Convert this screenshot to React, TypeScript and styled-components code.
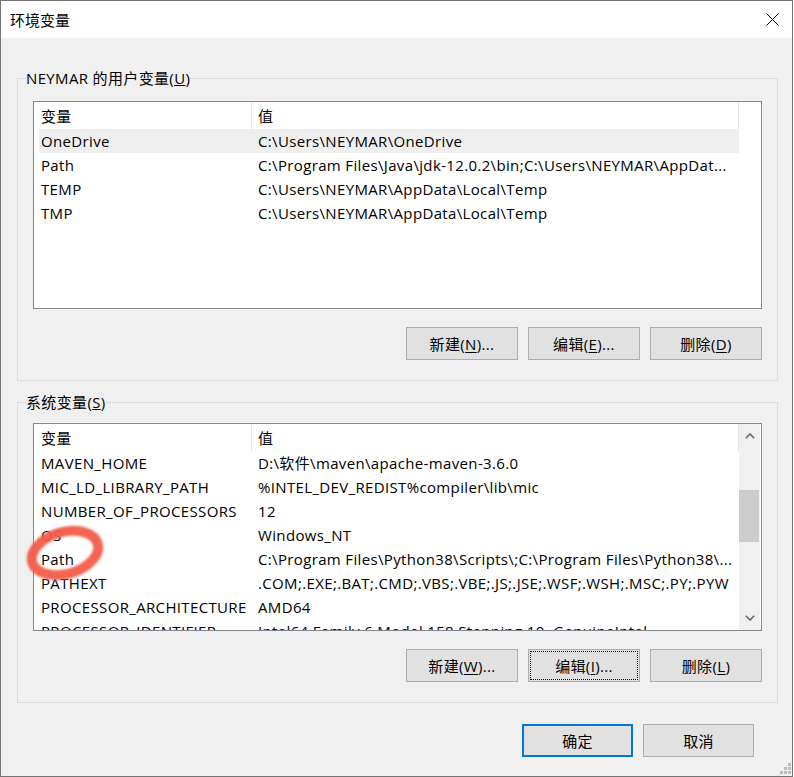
import React from "react";
import styled, { createGlobalStyle } from "styled-components";

const GlobalStyle = createGlobalStyle`
  html, body {
    margin: 0;
    padding: 0;
    background: #ffffff;
  }
  body {
    font-family: "Open Sans", "Noto Sans CJK SC", sans-serif;
    font-size: 15px;
    letter-spacing: 0.35px;
    color: #000000;
  }
`;

const Window = styled.div`
  position: relative;
  width: 793px;
  height: 777px;
  box-sizing: border-box;
  border: 1px solid #747474;
  background: #f0f0f0;
  display: flex;
  flex-direction: column;
`;

const TitleBar = styled.div`
  height: 37px;
  flex-shrink: 0;
  background: #ffffff;
  display: flex;
  align-items: center;
  justify-content: space-between;
  padding: 0 13px 0 9px;
`;

const TitleText = styled.span`
  font-size: 15px;
  line-height: 20px;
  letter-spacing: 0;
`;

const Content = styled.div`
  padding: 30px 14px 0 16px;
  display: flex;
  flex-direction: column;
`;

const GroupBox = styled.fieldset<{ $gap: number }>`
  margin: ${(p) => p.$gap}px 0 0 0;
  padding: 0;
  min-width: 0;
  border: 1px solid #dcdcdc;
`;

const GroupLegend = styled.legend`
  margin-left: 8px;
  padding: 0;
  font-size: 15px;
  line-height: 20px;
`;

const GroupInner = styled.div<{ $top: number }>`
  padding: ${(p) => p.$top}px 15px 20px 15px;
  display: flex;
  flex-direction: column;
`;

const ListBox = styled.div`
  height: 208px;
  box-sizing: border-box;
  border: 1px solid #828790;
  background: #ffffff;
  display: flex;
  overflow: hidden;
`;

const ListMain = styled.div`
  width: 705px;
  flex-shrink: 0;
  overflow: hidden;
`;

const HeaderRow = styled.div`
  display: flex;
  height: 27px;
`;

const HeaderCell = styled.div<{ $width: number; $pad: number }>`
  width: ${(p) => p.$width}px;
  box-sizing: border-box;
  padding-left: ${(p) => p.$pad}px;
  border-right: 1px solid #e5e5e5;
  line-height: 29px;
  white-space: nowrap;
`;

const Row = styled.div<{ $selected?: boolean }>`
  display: grid;
  grid-template-columns: 212px 1fr;
  width: 700px;
  margin-left: 5px;
  height: 24px;
  line-height: 24px;
  background: ${(p) => (p.$selected ? "#efefef" : "transparent")};
`;

const Cell = styled.div<{ $pad: number }>`
  padding-left: ${(p) => p.$pad}px;
  white-space: nowrap;
  overflow: hidden;
`;

const Scrollbar = styled.div`
  width: 21px;
  background: #f0f0f0;
  display: flex;
  flex-direction: column;
`;

const ScrollArrow = styled.div`
  height: 24px;
  display: flex;
  align-items: center;
  justify-content: center;
`;

const ScrollTrack = styled.div`
  flex: 1;
`;

const ScrollThumb = styled.div<{ $offset: number; $size: number }>`
  margin-top: ${(p) => p.$offset}px;
  height: ${(p) => p.$size}px;
  width: 20px;
  background: #cdcdcd;
`;

const ButtonRow = styled.div`
  display: flex;
  justify-content: flex-end;
  gap: 10px;
  margin-top: 18px;
`;

const Button = styled.div<{ $width: number; $default?: boolean; $focused?: boolean }>`
  width: ${(p) => p.$width}px;
  height: 33px;
  box-sizing: border-box;
  display: flex;
  align-items: center;
  justify-content: center;
  background: #e1e1e1;
  border: ${(p) => (p.$default ? "2px solid #0078d7" : "1px solid #adadad")};
  font-size: 15px;
  line-height: 20px;
  outline: ${(p) => (p.$focused ? "1px dotted #000000" : "none")};
  outline-offset: -3px;

  u {
    text-decoration-thickness: 1px;
    text-underline-offset: 2px;
  }
`;

const Footer = styled.div`
  display: flex;
  justify-content: flex-end;
  gap: 10px;
  padding: 21px 24px 0 0;
`;

const Grip = styled.svg`
  position: absolute;
  right: 1px;
  bottom: 2px;
`;

const Annotation = styled.svg`
  position: absolute;
  left: 16px;
  top: 516px;
  pointer-events: none;
`;

type Variable = { name: string; value: string };

const userVars: Variable[] = [
  { name: "OneDrive", value: "C:\\Users\\NEYMAR\\OneDrive" },
  {
    name: "Path",
    value: "C:\\Program Files\\Java\\jdk-12.0.2\\bin;C:\\Users\\NEYMAR\\AppDat...",
  },
  { name: "TEMP", value: "C:\\Users\\NEYMAR\\AppData\\Local\\Temp" },
  { name: "TMP", value: "C:\\Users\\NEYMAR\\AppData\\Local\\Temp" },
];

const systemVars: Variable[] = [
  { name: "MAVEN_HOME", value: "D:\\软件\\maven\\apache-maven-3.6.0" },
  { name: "MIC_LD_LIBRARY_PATH", value: "%INTEL_DEV_REDIST%compiler\\lib\\mic" },
  { name: "NUMBER_OF_PROCESSORS", value: "12" },
  { name: "OS", value: "Windows_NT" },
  {
    name: "Path",
    value: "C:\\Program Files\\Python38\\Scripts\\;C:\\Program Files\\Python38\\...",
  },
  { name: "PATHEXT", value: ".COM;.EXE;.BAT;.CMD;.VBS;.VBE;.JS;.JSE;.WSF;.WSH;.MSC;.PY;.PYW" },
  { name: "PROCESSOR_ARCHITECTURE", value: "AMD64" },
  { name: "PROCESSOR_IDENTIFIER", value: "Intel64 Family 6 Model 158 Stepping 10, GenuineIntel" },
];

const Chevron = ({ up }: { up?: boolean }) => (
  <svg width="10" height="6" viewBox="0 0 10 6">
    <polyline
      points={up ? "0.8,5.2 5,1 9.2,5.2" : "0.8,0.8 5,5 9.2,0.8"}
      fill="none"
      stroke="#606060"
      strokeWidth="1.5"
    />
  </svg>
);

const VarList = ({
  vars,
  selected,
  scroll,
}: {
  vars: Variable[];
  selected?: number;
  scroll?: boolean;
}) => (
  <ListBox>
    <ListMain>
      <HeaderRow>
        <HeaderCell $width={218} $pad={7}>
          变量
        </HeaderCell>
        <HeaderCell $width={487} $pad={6}>
          值
        </HeaderCell>
      </HeaderRow>
      {vars.map((v, i) => (
        <Row key={v.name + i} $selected={i === selected}>
          <Cell $pad={2}>{v.name}</Cell>
          <Cell $pad={7}>{v.value}</Cell>
        </Row>
      ))}
    </ListMain>
    {scroll && (
      <Scrollbar>
        <ScrollArrow>
          <Chevron up />
        </ScrollArrow>
        <ScrollTrack>
          <ScrollThumb $offset={42} $size={52} />
        </ScrollTrack>
        <ScrollArrow>
          <Chevron />
        </ScrollArrow>
      </Scrollbar>
    )}
  </ListBox>
);

export default function App() {
  return (
    <>
      <GlobalStyle />
      <Window>
        <TitleBar>
          <TitleText>环境变量</TitleText>
          <svg width="13" height="13" viewBox="0 0 13 13">
            <path d="M0.5 0.5 L12.5 12.5 M12.5 0.5 L0.5 12.5" stroke="#000" strokeWidth="1" />
          </svg>
        </TitleBar>
        <Content>
          <GroupBox $gap={0}>
            <GroupLegend>
              NEYMAR 的用户变量(<u>U</u>)
            </GroupLegend>
            <GroupInner $top={13}>
              <VarList vars={userVars} selected={0} />
              <ButtonRow>
                <Button $width={112}>
                  新建(<u>N</u>)...
                </Button>
                <Button $width={112}>
                  编辑(<u>E</u>)...
                </Button>
                <Button $width={112}>
                  删除(<u>D</u>)
                </Button>
              </ButtonRow>
            </GroupInner>
          </GroupBox>
          <GroupBox $gap={11}>
            <GroupLegend>
              系统变量(<u>S</u>)
            </GroupLegend>
            <GroupInner $top={11}>
              <VarList vars={systemVars} scroll />
              <ButtonRow>
                <Button $width={112}>
                  新建(<u>W</u>)...
                </Button>
                <Button $width={112} $focused>
                  编辑(<u>I</u>)...
                </Button>
                <Button $width={112}>
                  删除(<u>L</u>)
                </Button>
              </ButtonRow>
            </GroupInner>
          </GroupBox>
          <Footer>
            <Button $width={111} $default>
              确定
            </Button>
            <Button $width={111}>取消</Button>
          </Footer>
        </Content>
        <Grip width="12" height="12" viewBox="0 0 12 12">
          <g fill="#bdbdbd">
            <rect x="9" y="1" width="3" height="3" />
            <rect x="5" y="5" width="3" height="3" />
            <rect x="9" y="5" width="3" height="3" />
            <rect x="1" y="9" width="3" height="3" />
            <rect x="5" y="9" width="3" height="3" />
            <rect x="9" y="9" width="3" height="3" />
          </g>
        </Grip>
        <Annotation width="100" height="72" viewBox="0 0 100 72">
          <defs>
            <filter id="soft" x="-20%" y="-20%" width="140%" height="140%">
              <feGaussianBlur stdDeviation="1.1" />
            </filter>
          </defs>
          <ellipse
            cx="48"
            cy="36"
            rx="34"
            ry="21"
            transform="rotate(-16 48 36)"
            fill="none"
            stroke="#f25c4a"
            strokeOpacity="0.95"
            strokeWidth="10"
            filter="url(#soft)"
          />
        </Annotation>
      </Window>
    </>
  );
}
